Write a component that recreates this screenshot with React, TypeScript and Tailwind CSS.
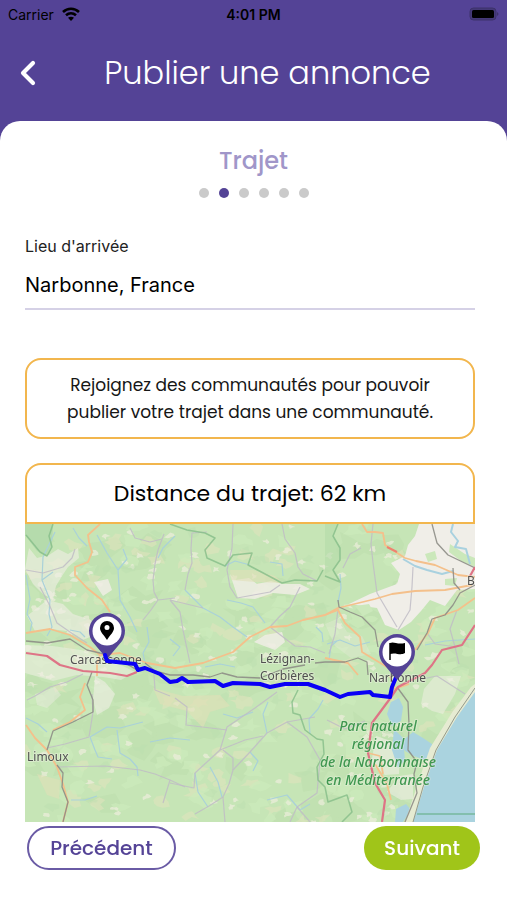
import { ChevronLeft } from 'lucide-react'

const STEPS = 6
const CURRENT_STEP = 2

// Seeded generator so the land cover looks the same on every render
function createRandom(seed: number) {
  let value = seed
  return () => {
    value = (value * 16807) % 2147483647
    return value / 2147483647
  }
}

function createPatches(seed: number, count: number, size: number) {
  const random = createRandom(seed)
  return Array.from({ length: count }, () => {
    const cx = random() * 450
    const cy = random() * 298
    const points = Array.from({ length: 9 }, (_, i) => {
      const angle = (i / 9) * Math.PI * 2
      const radius = size * (0.3 + random())
      return `${(cx + Math.cos(angle) * radius * 1.5).toFixed(1)},${(cy + Math.sin(angle) * radius).toFixed(1)}`
    })
    return points.join(' ')
  })
}

const landCover = [
  { fill: '#bedfae', opacity: 0.6, patches: createPatches(41, 70, 13) },
  { fill: '#dfe4bd', opacity: 0.6, patches: createPatches(97, 110, 6) },
  { fill: '#cdecbc', opacity: 0.7, patches: createPatches(523, 130, 7) },
  { fill: '#eeeedd', opacity: 0.7, patches: createPatches(771, 190, 3) },
  { fill: '#bcdfb0', opacity: 0.4, patches: createPatches(1289, 60, 5) },
]

const rivers = [
  'M72 11L82 29L93 46L94 62L95 76L105 93L112 108',
  'M48 4L54 14L62 22 M93 46L102 35L98 25',
  'M30 8L18 33L17 56L25 76L24 90L27 103L22 112',
  'M1 51L5 75L2 90L7 99L5 108 M17 56L28 48',
  'M150 12L138 24L133 34 M122 103L124 118L118 129L120 139 M45 106L55 108L60 113',
  'M160 66L168 74L178 84L195 93L208 103L222 113',
  'M202 76L216 79L228 83L240 99 M200 42L210 37L225 41',
  'M145 115L155 123L148 132 M180 143L195 140L210 143',
  'M245 38L257 40L258 52',
  'M65 213L82 203L95 204L118 198',
  'M92 206L95 229L105 235L112 243L113 252 M65 213L70 226L73 233L87 235',
  'M1 194L13 200L22 208 M125 218L145 214L165 216 M46 276L60 276L72 272',
  'M170 249L173 268L183 283 M185 243L193 258L197 273 M242 209L238 190L243 178',
  'M198 190L212 194L228 188 M225 228L233 237L228 247 M242 276L262 271L275 286L285 280',
  'M285 210L284 195L293 185L298 176 M302 120L315 116L330 122L345 118',
  'M304 136L306 122L312 117 M400 121L420 117L450 115 M291 103L297 109L298 118',
  'M315 50L316 64L313 78',
]

const minorRoads = [
  'M1 46L18 49L38 43L47 34L50 25 M15 63L24 80L32 99L45 108L62 119',
  'M133 26L130 40L128 56L129 68L133 76L126 86L118 96 M133 76L150 74 M133 26L139 10',
  'M105 4L110 14L125 18L137 15',
  'M160 66L163 50L167 39L166 25L167 9L182 8 M208 0L207 24L202 46L205 63L212 74L245 68L255 61',
  'M275 63L265 83L255 92L245 103 M145 76L178 84 M145 76L155 88L158 106L165 139',
  'M262 116L270 122L285 123L300 129 M257 0L260 15L270 29L273 43L278 50L292 57',
  'M348 0L346 20L348 39L352 69L372 103 M388 43L387 63L385 86L373 106',
  'M318 44L325 30L336 24 M313 85L310 110L304 130',
  'M2 176L10 172L25 163L42 158L58 150 M67 170L68 188L64 213 M64 213L40 220L22 224',
  'M32 243L80 242L115 246L130 250L145 256L138 279 M145 256L160 263',
  'M129 150L130 166L145 172 M150 174L162 183L161 201L202 206',
  'M252 168L230 184L202 203L195 226L182 238L170 249L169 264L145 259',
  'M195 226L220 216L238 212 M198 226L208 234L208 246',
  'M262 198L242 209L225 228L208 246L204 260L198 273L200 298',
  'M262 198L282 213L295 236L292 269L272 283L265 298 M170 290L184 282L198 273',
  'M245 103L262 116 M262 198L290 193 M272 283L285 298',
  'M397 155L412 152L440 170 M340 197L320 205L302 196',
  'M432 86L425 105L430 123L434 140 M402 109L410 120L432 123',
]

const mainRoads = [
  'M75 0L63 11L64 18L67 28L63 38L50 43L50 51L62 64L77 76L85 88',
  'M1 109L25 105L45 111L65 123L75 131L95 129L122 139L150 144L178 139L208 128L225 113L245 103L262 102L278 96L300 91L313 84L350 75L367 70L390 67L420 66L447 61',
  'M337 0L342 8L350 8L358 9L360 21L380 34L391 37L410 41L433 51L450 53',
  'M450 74L433 86L410 94L403 109L390 126',
  'M300 91L313 86L320 99L335 113L337 128L362 143 M300 134L323 139L333 151',
  'M60 159L55 173L60 186L45 198L28 206 M1 201L10 214L22 226L32 243L38 260L43 278L38 298',
  'M343 229L355 232L358 250 M75 131L72 140L72 152 M365 152L370 165L384 160',
  'M366 276L362 260L350 240',
]

const railways = [
  'M1 117L22 119L45 115L62 126L75 129L100 139L112 146',
  'M313 76L314 83L325 88L337 93L350 106L353 123',
  'M450 61L435 69L428 81L420 91L407 95L402 109L392 126',
  'M428 44L429 59L435 66 M290 139L300 138L320 138L333 134L342 138L343 151',
  'M120 139L130 147L145 151L168 151L185 153L197 149L212 153L235 154L258 145L280 141',
  'M407 0L412 19L423 31L450 44',
  'M67 148L62 161L68 176L68 188L48 198L28 207L22 226 M32 241L38 249L37 263L43 278L38 298',
  'M372 163L383 178L384 200L383 226L392 238L389 250L392 269L380 298',
]

const motorways = [
  'M1 129L22 132L35 141L58 147L85 149L102 152L112 148',
  'M450 101L437 121L417 126L407 141L400 149L373 163L364 176L347 199L343 229L350 259L360 276L357 298',
  'M445 52L450 43',
]

const parkBorders = [
  'M145 0L162 6L180 9L190 14L180 26L182 34L200 42L208 31L227 29L223 41L242 51L257 59L270 56L292 57L298 46',
  'M313 0L308 12L315 24L315 36L308 46L315 58L300 52',
  'M1 11L15 28L22 32L27 23L24 12L28 0',
  'M273 166L267 178L268 189L275 191L280 206L292 215L298 216L299 230L292 243L293 256L300 263L303 278L322 271L327 288L317 298',
]

const townLabels = [
  { name: 'Carcassonne', x: 45, y: 140 },
  { name: 'Lézignan-', x: 235, y: 139 },
  { name: 'Corbières', x: 235, y: 156 },
  { name: 'Narbonne', x: 344, y: 158 },
  { name: 'Limoux', x: 2, y: 237 },
  { name: 'B', x: 442, y: 61 },
]

const parkLabels = [
  { name: 'Parc naturel', y: 207 },
  { name: 'régional', y: 225 },
  { name: 'de la Narbonnaise', y: 243 },
  { name: 'en Méditerranée', y: 261 },
]

const ROUTE =
  'M80 131L82 137L110 140L113 146L120 144L135 150L145 158L152 157L157 154L163 158L190 157L198 162L208 159L235 160L245 163L260 160L283 160L300 166L315 173L323 170L345 168L348 171L365 173L367 163L372 151'

function Pin({ x, y, children }: { x: number; y: number; children: React.ReactNode }) {
  return (
    <g transform={`translate(${x} ${y})`}>
      <path d="M0 28L-13 12.5A18 18 0 1 1 13 12.5Z" fill="#544396" />
      <circle r="14.5" fill="#fff" />
      {children}
    </g>
  )
}

function RouteMap() {
  return (
    <svg
      viewBox="0 0 450 298"
      role="img"
      aria-label="Itinéraire de Carcassonne à Narbonne"
      className="block w-full"
      fill="none"
      strokeLinejoin="round"
    >
      <rect width="450" height="298" fill="#c6e5b6" />
      {landCover.map((layer) => (
        <g key={layer.fill} fill={layer.fill} opacity={layer.opacity}>
          {layer.patches.map((points) => (
            <polygon key={points} points={points} />
          ))}
        </g>
      ))}

      {/* Plains and vineyards */}
      <path
        d="M394 0H450V65L432 66L420 82L405 76L396 87L386 98L374 106L360 101L352 84L324 80L345 70L372 60L375 50L366 39L380 32L383 21L390 12Z"
        fill="#f0eee8"
      />
      <g fill="#cbe8bb">
        <path d="M400 30L410 27L412 35L403 38Z" />
        <path d="M425 20L440 30L450 34V43L436 37L424 28Z" />
        <path d="M420 55L432 54L430 62L420 61Z" />
        <path d="M330 82L344 80L348 87L338 92Z" />
      </g>
      <g fill="#f0eee6" opacity="0.85">
        <path d="M205 50L210 56L224 54L232 60L246 57L258 60L275 60L285 65L270 71L248 69L230 75L213 74Z" />
        <path d="M229 118L240 111L257 108L260 118L250 126L239 122Z" />
        <path d="M4 24L12 34L24 31L33 25L43 30L53 24L54 34L43 43L37 52L31 62L28 76L18 70L8 60L0 45Z" opacity="0.7" />
        <path d="M2 92L22 76L38 80L48 90L66 96L72 110L58 116L42 107L25 105L10 107Z" opacity="0.7" />
        <path d="M69 58L83 55L87 66L78 72Z" />
        <path d="M0 121L28 122L56 126L75 133L98 142L110 148L96 156L78 153L52 151L28 157L0 149Z" opacity="0.6" />
        <path d="M70 152L80 158L90 170L84 184L72 191L68 176Z" opacity="0.7" />
        <path d="M10 170L30 163L36 171L22 184L12 181Z" opacity="0.5" />
        <path d="M399 165L410 152L436 152L430 170L418 190L407 187L396 180Z" opacity="0.6" />
        <path d="M351 212L375 220L374 250L360 251L346 240Z" opacity="0.7" />
        <path d="M374 252L388 250L388 275L376 276L362 268Z" opacity="0.7" />
        <path d="M300 100L314 94L322 108L337 112L346 130L326 134L310 122Z" opacity="0.35" />
      </g>
      <path d="M0 0H28L27 23L22 32L12 27L0 11Z" fill="#b5dbac" />
      <path d="M300 0H313L308 12L315 24L315 36L308 46L300 50Z" fill="#b4dba9" opacity="0.6" />
      <g fill="#e1dfb7" opacity="0.6">
        <path d="M205 46L228 46L250 52L258 59L230 58L206 56Z" />
        <path d="M128 164L158 172L195 171L205 182L185 188L178 204L162 187L135 180Z" />
        <path d="M12 250L35 256L34 275L22 271Z" />
      </g>

      {/* Lagoons and sea */}
      <g fill="#aad3df">
        <path d="M366 178L374 174L378 183L376 197L367 202L362 190Z" />
        <path d="M388 208L398 214L407 220L409 229L399 236L389 232L380 227L376 218Z" />
        <path d="M369 205L378 214L380 236L373 244L367 226Z" />
        <path d="M371 285L381 280L386 286L378 298H370Z" />
      </g>
      <path d="M450 163L430 193L410 226L397 263L386 298H450Z" fill="#aad3df" />
      <path d="M446 163L428 187L405 224L393 259L380 298H388L399 263L412 226L432 193L450 168V160Z" fill="#e6ebd2" />
      <path d="M450 164L430 193L411 226L398 263L388 298" stroke="#959a8b" />

      {rivers.map((d) => (
        <path key={d} d={d} stroke="#a9d1d9" strokeWidth="1.2" />
      ))}
      {minorRoads.map((d) => (
        <path key={d} d={d} stroke="#c0bcc6" strokeWidth="1.2" opacity="0.85" />
      ))}
      {parkBorders.map((d) => (
        <path key={d} d={d} stroke="#84bd88" strokeWidth="1.5" opacity="0.8" />
      ))}
      <path d="M392 290H450" stroke="#83bfae" strokeWidth="2" />
      <path d="M378 35L390 42L402 46L417 50L428 47" stroke="#a9d1df" strokeWidth="2" />
      <path d="M428 0L426 8L433 17L430 23L441 25L445 40" stroke="#a9d1df" strokeWidth="2" />
      {mainRoads.map((d) => (
        <path key={d} d={d} stroke="#f4c08b" strokeWidth="1.8" />
      ))}
      <path d="M362 23L372 28" stroke="#ee8270" strokeWidth="2" />
      {railways.map((d) => (
        <path key={d} d={d} stroke="#8d8d86" strokeWidth="1.3" opacity="0.9" />
      ))}
      {motorways.map((d) => (
        <path key={d} d={d} stroke="#de7486" strokeWidth="2.2" />
      ))}

      <g
        className="font-['Noto_Sans',sans-serif] text-[12px]"
        fill="#505050"
        stroke="#f4f5ea"
        strokeWidth="2"
        strokeOpacity="0.4"
        paintOrder="stroke"
      >
        {townLabels.map((label) => (
          <text key={label.name} x={label.x} y={label.y}>{label.name}</text>
        ))}
      </g>
      <g
        className="font-['Noto_Sans',sans-serif] text-[14px] font-medium italic"
        fill="#3f9750"
        stroke="#eef3e4"
        strokeWidth="2"
        strokeOpacity="0.4"
        paintOrder="stroke"
        textAnchor="middle"
      >
        {parkLabels.map((label) => (
          <text key={label.name} x="353" y={label.y}>{label.name}</text>
        ))}
      </g>

      <Pin x={82} y={107}>
        <path
          fill="#000"
          fillRule="evenodd"
          d="M0 9C-3 4-7 1-7-3A7 7 0 0 1 7-3C7 1 3 4 0 9ZM0-6A2.5 2.5 0 1 0 0-1A2.5 2.5 0 1 0 0-6Z"
        />
      </Pin>
      <path d={ROUTE} stroke="#0a00f5" strokeWidth="4" strokeLinecap="round" />
      <Pin x={372} y={128}>
        <path d="M-7-9V8" stroke="#000" strokeWidth="1.5" />
        <path fill="#000" d="M-7-9C-3-11 0-7 8-9V1C3 4-1 0-7 2Z" />
      </Pin>
    </svg>
  )
}

function StatusBar() {
  return (
    <div className="grid h-7 grid-cols-3 items-center px-2 font-[Inter,sans-serif] text-[14px] text-black">
      <div className="flex items-center gap-2">
        <span>Carrier</span>
        <svg viewBox="0 0 18 14" className="w-[18px]" fill="none" stroke="currentColor" strokeWidth="2.6">
          <path d="M1 5C5.5.7 12.5.7 17 5" />
          <path d="M4 8.300C7 5.600 11 5.600 14 8.300" />
          <path d="M9 14L6 10.800C7.700 9.300 10.300 9.300 12 10.800Z" fill="currentColor" stroke="none" />
        </svg>
      </div>
      <span className="text-center font-semibold">4:01 PM</span>
      <svg viewBox="0 0 30 14" className="w-[30px] justify-self-end">
        <rect x="1" y="1" width="26" height="12" rx="3.500" fill="#453979" stroke="#3d326b" />
        <rect x="3" y="3" width="22" height="8" rx="1.500" fill="#000" />
        <path d="M28 5C30 6 30 8 28 9Z" fill="#3d326b" />
      </svg>
    </div>
  )
}

export default function App() {
  return (
    <div className="flex min-h-screen flex-col bg-[#544396] font-[Poppins,Inter,sans-serif]">
      <StatusBar />
      <header className="grid h-[93px] grid-cols-[56px_1fr_56px] items-center pb-1">
        <button type="button" aria-label="Retour" className="flex h-12 items-center pl-2 text-white">
          <ChevronLeft className="size-10" strokeWidth={2.5} />
        </button>
        <h1 className="pl-7 text-center text-[32px] font-light whitespace-nowrap text-white">Publier une annonce</h1>
      </header>

      <main className="flex-1 rounded-t-[20px] bg-white">
        <h2 className="pt-6 text-center text-[24px] leading-8 font-medium text-[#a096c9]">Trajet</h2>
        <ol className="mt-[11px] flex justify-center gap-2.5" aria-label={`Étape ${CURRENT_STEP} sur ${STEPS}`}>
          {Array.from({ length: STEPS }, (_, i) => (
            <li
              key={i}
              className={i + 1 === CURRENT_STEP ? 'size-2.5 rounded-full bg-[#544396]' : 'size-2.5 rounded-full bg-[#cacaca]'}
            />
          ))}
        </ol>

        <div className="pr-8 pl-[25px]">
          <label htmlFor="arrival" className="mt-9 block font-[Inter,sans-serif] text-[16px] leading-6 text-[#222222]">
            Lieu d'arrivée
          </label>
          <input
            id="arrival"
            type="text"
            defaultValue="Narbonne, France"
            className="block h-[52px] w-full border-b-2 border-[#d5d1e6] pt-1 font-[Inter,sans-serif] text-[20px] text-black outline-none"
          />

          <p className="mt-12 rounded-2xl border-2 border-[#f2b64d] px-8 pt-3 pb-[11px] text-center text-[17px] leading-[27px] text-[#161616]">
            Rejoignez des communautés pour pouvoir publier votre trajet dans une communauté.
          </p>

          <section className="mt-6">
            <h3 className="rounded-t-2xl border-2 border-[#f2b64d] pt-3 pb-[11px] text-center text-[22px] leading-[34px] text-black">
              Distance du trajet: 62 km
            </h3>
            <RouteMap />
          </section>
        </div>

        <div className="flex justify-between pt-1 pr-[27px] pb-7 pl-[27px] text-[20px] font-medium">
          <button type="button" className="h-11 w-[149px] rounded-full border-2 border-[#6a5ba5] text-[#544396]">
            Précédent
          </button>
          <button type="button" className="h-11 w-[116px] rounded-full bg-[#a0c519] text-white">
            Suivant
          </button>
        </div>
      </main>
    </div>
  )
}
